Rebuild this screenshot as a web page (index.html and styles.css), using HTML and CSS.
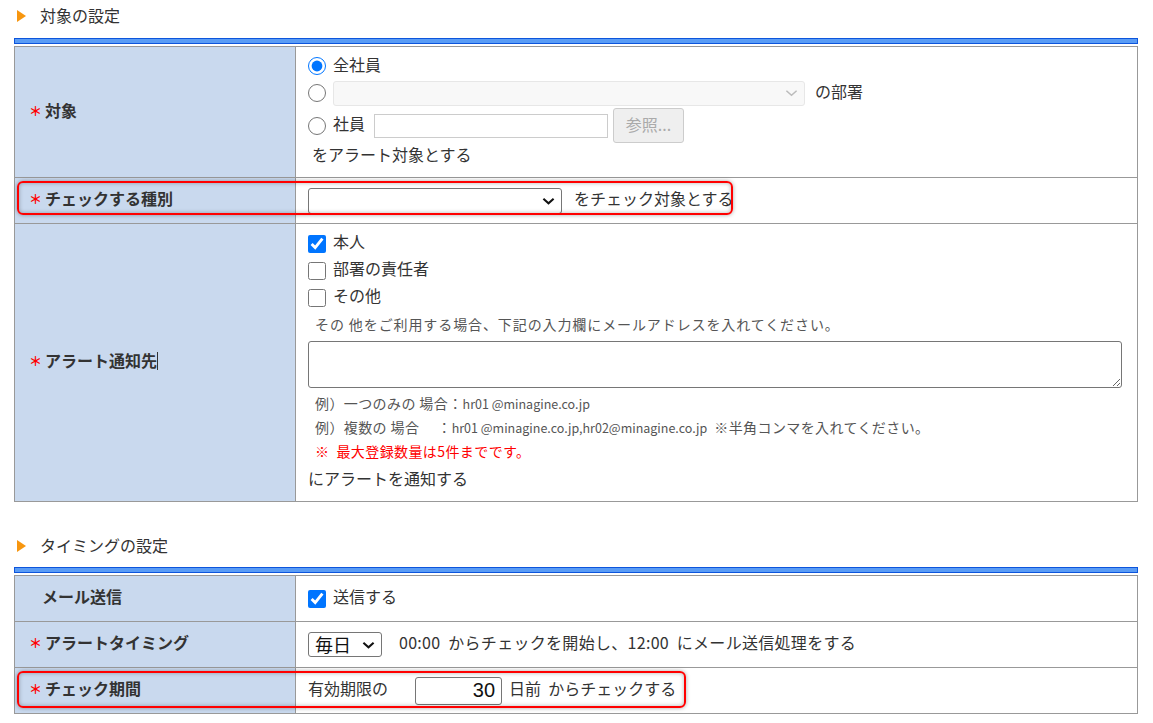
FILE: index.html
```html
<!DOCTYPE html>
<html lang="ja">

<head>
    <meta charset="UTF-8">
    <meta name="viewport" content="width=device-width, initial-scale=1.0">
    <title>アラート設定</title>
    <link rel="stylesheet" href="styles.css">
</head>

<body>
    <div class="page">
        <h2 class="section-title">対象の設定</h2>
        <div class="section-bar"></div>
        <table class="form-table">
            <tr class="row-target">
                <th><span class="req">＊</span>対象</th>
                <td>
                    <div class="line line-1">
                        <input type="radio" name="target" checked>
                        <span class="txt">全社員</span>
                    </div>
                    <div class="line line-2">
                        <input type="radio" name="target">
                        <span class="select-wrap">
                            <select class="dept-select" disabled><option></option></select>
                            <svg class="chevron light" viewBox="0 0 14 8"><path d="M1.5 1.5 L7 6.5 L12.5 1.5"/></svg>
                        </span>
                        <span class="txt after">の部署</span>
                    </div>
                    <div class="line line-3">
                        <input type="radio" name="target">
                        <span class="txt">社員</span>
                        <input type="text" class="emp-input">
                        <button class="ref-button" disabled>参照...</button>
                    </div>
                    <div class="line line-4"><span class="txt">をアラート対象とする</span></div>
                </td>
            </tr>
            <tr class="row-kind">
                <th>
                    <span class="req">＊</span>チェックする種別
                    <div class="highlight highlight-kind"></div>
                </th>
                <td>
                    <div class="line">
                        <span class="select-wrap">
                            <select class="kind-select"><option></option></select>
                            <svg class="chevron" viewBox="0 0 14 8"><path d="M1.5 1.5 L7 6.5 L12.5 1.5"/></svg>
                        </span>
                        <span class="txt after-kind">をチェック対象とする</span>
                    </div>
                </td>
            </tr>
            <tr class="row-notify">
                <th><span class="req">＊</span>アラート通知先<span class="caret"></span></th>
                <td>
                    <label class="check-line"><input type="checkbox" checked><span class="txt">本人</span></label>
                    <label class="check-line"><input type="checkbox"><span class="txt">部署の責任者</span></label>
                    <label class="check-line"><input type="checkbox"><span class="txt">その他</span></label>
                    <div class="note lead">その 他をご利用する場合、下記の入力欄にメールアドレスを入れてください。</div>
                    <textarea class="mail-area"></textarea>
                    <div class="note example">例）一つのみの 場合：<span class="latin">hr01 @minagine.co.jp</span></div>
                    <div class="note example">例）複数の 場合　 ：<span class="latin">hr01 @minagine.co.jp,hr02@minagine.co.jp</span>&nbsp; ※半角コンマを入れてください。</div>
                    <div class="note warn">※&nbsp; 最大登録数量は5件までです。</div>
                    <div class="tail">にアラートを通知する</div>
                </td>
            </tr>
        </table>

        <h2 class="section-title second">タイミングの設定</h2>
        <div class="section-bar"></div>
        <table class="form-table timing">
            <tr>
                <th class="no-req">メール送信</th>
                <td><label class="check-line"><input type="checkbox" checked><span class="txt">送信する</span></label></td>
            </tr>
            <tr>
                <th><span class="req">＊</span>アラートタイミング</th>
                <td>
                    <div class="line">
                        <span class="select-wrap">
                            <select class="freq-select"><option>毎日</option></select>
                            <svg class="chevron" viewBox="0 0 14 8"><path d="M1.5 1.5 L7 6.5 L12.5 1.5"/></svg>
                        </span>
                        <span class="txt time-text">00:00&nbsp; からチェックを開始し、12:00&nbsp; にメール送信処理をする</span>
                    </div>
                </td>
            </tr>
            <tr>
                <th>
                    <span class="req">＊</span>チェック期間
                    <div class="highlight highlight-period"></div>
                </th>
                <td>
                    <div class="line">
                        <span class="txt">有効期限の</span>
                        <input type="text" class="days-input" value="30">
                        <span class="txt">日前&nbsp; からチェックする</span>
                    </div>
                </td>
            </tr>
        </table>
    </div>
</body>

</html>
```

FILE: styles.css
```css
body {
    margin: 0;
    padding: 0;
    background-color: #fff;
    font-family: "Noto Sans CJK JP", "Liberation Sans", sans-serif;
    color: #333;
    font-size: 16px;
}

.page {
    width: 1124px;
    padding-left: 14px;
}

.section-title {
    margin: 0;
    height: 32px;
    line-height: 30px;
    font-size: 16px;
    font-weight: normal;
    color: #333;
    padding-left: 26px;
    position: relative;
}

.section-title::before {
    content: "";
    position: absolute;
    left: 3px;
    top: 10px;
    border-left: 9px solid #f7960f;
    border-top: 6px solid transparent;
    border-bottom: 6px solid transparent;
}

.section-title.second {
    margin-top: 28px;
}

.section-bar {
    margin-top: 6px;
    height: 4px;
    background-color: #5a9cf5;
    border: 1px solid #0d55dc;
}

.section-title.second + .section-bar {
    margin-top: 5px;
}

.form-table {
    width: 1124px;
    margin-top: 2px;
    border-collapse: collapse;
    border: 1px solid #999;
}

.form-table th,
.form-table td {
    border: 1px solid #999;
    padding: 0;
}

.form-table th {
    width: 281px;
    background-color: #c9d9ee;
    text-align: left;
    font-weight: bold;
    color: #333;
    padding-left: 14px;
    padding-bottom: 5px;
    box-sizing: border-box;
    position: relative;
}

.form-table th.no-req {
    padding-left: 27px;
}

.form-table td {
    padding-left: 12px;
    padding-right: 14px;
    font-weight: normal;
}

.txt {
    padding-bottom: 5px;
}

.req {
    display: inline-block;
    width: 16px;
    color: #f00;
    font-size: 13px;
    font-weight: bold;
    vertical-align: 1px;
}

.caret {
    display: inline-block;
    width: 1px;
    height: 18px;
    background-color: #333;
    vertical-align: -3px;
}

.line {
    display: flex;
    align-items: center;
}

input[type="radio"],
input[type="checkbox"] {
    width: 18px;
    height: 18px;
    margin: 0 7px 0 0;
    accent-color: #0075ff;
}

.row-target td {
    padding-top: 6px;
    padding-bottom: 9px;
}

.line-1 {
    height: 26px;
}

.line-2 {
    height: 28px;
}

.line-3 {
    height: 37px;
}

.line-4 {
    height: 24px;
    padding-left: 4px;
}

.select-wrap {
    position: relative;
    display: inline-flex;
}

.select-wrap select {
    appearance: none;
    -webkit-appearance: none;
    font-family: inherit;
    margin: 0;
}

.chevron {
    position: absolute;
    right: 7px;
    top: 50%;
    width: 13px;
    height: 8px;
    margin-top: -4px;
    fill: none;
    stroke: #111;
    stroke-width: 2.2;
    pointer-events: none;
}

.chevron.light {
    stroke: #bbb;
    stroke-width: 1.6;
}

.dept-select {
    width: 472px;
    height: 25px;
    border: 1px solid #ddd;
    border-radius: 3px;
    background-color: #f6f6f6;
}

.after {
    margin-left: 10px;
}

.emp-input {
    width: 234px;
    height: 24px;
    box-sizing: border-box;
    border: 1px solid #ccc;
    margin-left: 9px;
}

.ref-button {
    width: 71px;
    height: 35px;
    margin-left: 5px;
    border: 1px solid #ccc;
    border-radius: 3px;
    background-color: #efefef;
    color: #aaa;
    font-family: inherit;
    font-size: 16px;
    padding: 0 0 4px 0;
}

.row-kind td,
.row-kind th {
    height: 45px;
}

.kind-select {
    width: 254px;
    height: 26px;
    border: 1px solid #767676;
    border-radius: 3px;
    background-color: #fff;
}

.after-kind {
    margin-left: 12px;
}

.highlight {
    position: absolute;
    left: 2px;
    border: 2px solid #f00;
    border-radius: 6px;
    box-sizing: border-box;
    box-shadow: 0 0 4px rgba(0, 0, 0, 0.35), inset 0 0 4px rgba(0, 0, 0, 0.3);
    pointer-events: none;
    z-index: 2;
}

.highlight-kind {
    top: 3px;
    width: 716px;
    height: 34px;
}

.highlight-period {
    top: 3px;
    width: 669px;
    height: 37px;
}

.row-notify td {
    padding-top: 6px;
    padding-bottom: 9px;
}

.check-line {
    display: flex;
    align-items: center;
    height: 27px;
}

.note {
    font-size: 14px;
    letter-spacing: 0.4px;
    color: #555;
    padding-left: 7px;
    height: 28px;
    line-height: 26px;
    white-space: nowrap;
}

.note.lead {
    letter-spacing: 0.9px;
}

.note .latin {
    font-size: 12.5px;
    letter-spacing: 0;
}

.note.example {
    height: 24px;
    line-height: 22px;
}

.note.warn {
    color: #f00;
    height: 25px;
    line-height: 23px;
}

.mail-area {
    display: block;
    width: 814px;
    height: 47px;
    box-sizing: border-box;
    margin: 2px 0 4px 0;
    border: 1px solid #767676;
    border-radius: 3px;
}

.tail {
    height: 24px;
    line-height: 21px;
    margin-top: 3px;
}

.timing th,
.timing td {
    height: 45px;
}

.freq-select {
    width: 74px;
    height: 25px;
    border: 1px solid #767676;
    border-radius: 3px;
    background-color: #fff;
    font-size: 18px;
    line-height: 20px;
    color: #111;
    padding: 0 0 2px 6px;
}

.time-text {
    margin-left: 17px;
    letter-spacing: 0.3px;
}

.days-input {
    width: 87px;
    height: 28px;
    box-sizing: border-box;
    margin: 0 7px 0 27px;
    border: 1px solid #767676;
    border-radius: 3px;
    text-align: right;
    font-family: "Liberation Sans", sans-serif;
    font-size: 20px;
    color: #111;
    padding-right: 6px;
}
```
